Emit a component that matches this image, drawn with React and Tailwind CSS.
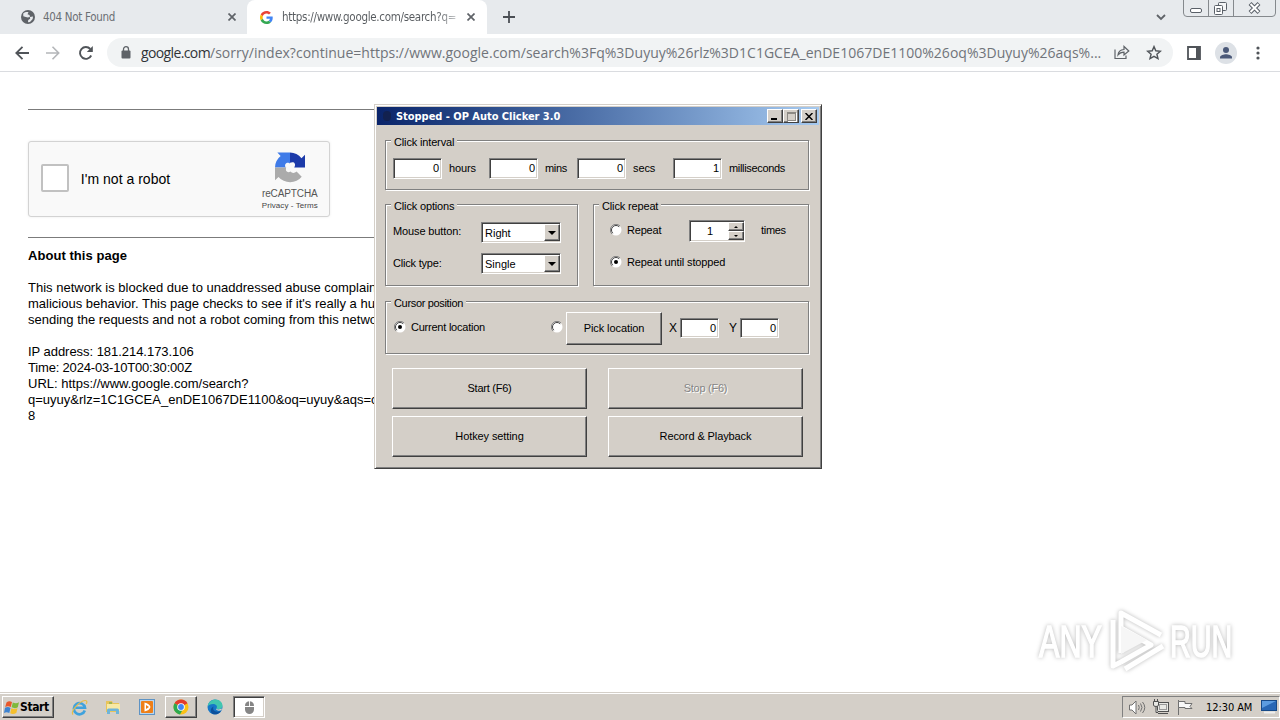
import React from "react";

const etched = "border border-[#808080] shadow-[1px_1px_0_#fff,inset_1px_1px_0_#fff]";
const raised =
  "bg-[#d4cfc8] border border-t-white border-l-white border-b-[#404040] border-r-[#404040] shadow-[inset_-1px_-1px_0_#808080]";
const sunken =
  "bg-white border border-t-[#808080] border-l-[#808080] border-b-white border-r-white shadow-[inset_1px_1px_0_#404040,inset_-1px_-1px_0_#d4cfc8]";

function Tab({ children, className }) {
  return <div className={`flex h-[34px] items-center ${className}`}>{children}</div>;
}

function CloseX({ className }) {
  return (
    <svg className={className} width="8" height="8" viewBox="0 0 8 8" stroke="#5f6368" strokeWidth="1.7">
      <path d="M.5.5l7 7M7.5.5l-7 7" />
    </svg>
  );
}

function Chrome() {
  return (
    <header className="font-['DejaVu_Sans_Condensed',sans-serif]">
      <div className="flex h-[34px] bg-[#e7eaed]">
        <Tab className="w-[240px] pl-[21px]">
          <svg width="14" height="14" viewBox="0 0 14 14">
            <circle cx="7" cy="7" r="7" fill="#5f6368" />
            <path d="M2.200 3.500C4 2 6 1.800 7.500 2.200L6.500 4.200l2 .8.500 1.800-2 .7-2.200-.5-2.500-.8zM12 6.500l-.3 2.500L9 12l-2 .3L7.200 10l2-1.200L8.800 7z" fill="#e7eaed" />
          </svg>
          <span className="mt-[2px] ml-2 grow text-[11.500px] tracking-[-0.300px] text-[#6b6f74]">404 Not Found</span>
          <CloseX className="mr-[4px]" />
        </Tab>
        <Tab className="relative ml-[7px] w-[240px] rounded-t-lg bg-white pl-[13px]">
          <svg width="13" height="13" viewBox="0 0 48 48">
            <path fill="#EA4335" d="M24 9.500c3.540 0 6.710 1.220 9.210 3.600l6.850-6.850C35.900 2.380 30.470 0 24 0 14.620 0 6.510 5.380 2.560 13.220l7.980 6.190C12.430 13.720 17.740 9.500 24 9.500z" />
            <path fill="#4285F4" d="M46.980 24.550c0-1.570-.15-3.090-.38-4.550H24v9.020h12.940c-.58 2.960-2.260 5.480-4.780 7.180l7.730 6c4.510-4.180 7.090-10.360 7.090-17.650z" />
            <path fill="#FBBC05" d="M10.530 28.590c-.48-1.450-.76-2.990-.76-4.590s.27-3.140.76-4.590l-7.980-6.190C.92 16.460 0 20.120 0 24c0 3.880.92 7.540 2.560 10.780l7.970-6.190z" />
            <path fill="#34A853" d="M24 48c6.480 0 11.930-2.130 15.890-5.810l-7.730-6c-2.150 1.450-4.920 2.300-8.160 2.300-6.260 0-11.570-4.220-13.470-9.910l-7.980 6.190C6.510 42.620 14.620 48 24 48z" />
          </svg>
          <span className="mt-[2px] ml-[9px] w-[175px] whitespace-nowrap bg-linear-to-r from-[#55595d] from-88% to-[#cfd1d3] bg-clip-text text-[11.500px] tracking-[-0.300px] text-transparent">
            https://www.google.com/search?q=
          </span>
          <CloseX className="ml-[10px]" />
        </Tab>
        <svg className="mt-[11px] ml-4" width="12" height="12" viewBox="0 0 12 12" stroke="#4b4f54" strokeWidth="1.800">
          <path d="M6 0v12M0 6h12" />
        </svg>
        <svg className="mt-[14px] ml-auto" width="10" height="7" viewBox="0 0 10 7" fill="none" stroke="#5f6368" strokeWidth="1.800">
          <path d="M1 1l4 4 4-4" />
        </svg>
        <svg className="mr-1 ml-[17px]" width="93" height="18" viewBox="0 0 93 18" fill="none" stroke="#85898d">
          <path d="M.5 0v13q0 3.500 3.500 3.500h85q3.500 0 3.500-3.500V0M25.500 0v16.500M50.500 0v16.500" />
          <g stroke="#5a6068">
            <rect x="7.500" y="8.500" width="11" height="4" rx="1.500" fill="#fff" />
            <rect x="35.500" y="2.500" width="8" height="8" rx="1" fill="#f4f5f6" />
            <rect x="31.500" y="5.500" width="8" height="9" rx="1" fill="#fff" />
            <rect x="34" y="8.500" width="3" height="3" />
          </g>
          <path d="M67 3.500l9 9M76 3.500l-9 9" stroke="#5a6068" strokeWidth="4" />
          <path d="M67.500 4l8 8M75.500 4l-8 8" stroke="#fff" strokeWidth="2" />
        </svg>
      </div>

      <div className="flex h-[38px] items-center border-b border-[#dadce0] bg-white pl-[15px]">
        <svg width="14" height="14" viewBox="0 0 14 14" fill="none" stroke="#505459" strokeWidth="1.800">
          <path d="M14 7H1.500M7.500.8L1.300 7l6.200 6.200" />
        </svg>
        <svg className="ml-[17px]" width="14" height="14" viewBox="0 0 14 14" fill="none" stroke="#b4b6b9" strokeWidth="1.600">
          <path d="M0 7h12.500M6.500.8L12.700 7l-6.200 6.200" />
        </svg>
        <svg className="ml-[18px]" width="16" height="16" viewBox="0 0 16 16">
          <path d="M13.200 10.500A5.900 5.900 0 1 1 12.300 4" fill="none" stroke="#505459" strokeWidth="1.900" />
          <path d="M14.800 1v6H8.800z" fill="#505459" />
        </svg>
        <div className="ml-[13px] flex h-[29px] w-[1066px] items-center rounded-full bg-[#f1f3f4] pl-[14px]">
          <svg width="10" height="13" viewBox="0 0 10 13">
            <rect y="4.500" x=".5" width="9" height="8" rx="1" fill="#5f6368" />
            <path d="M2.500 5V3.200a2.500 2.500 0 0 1 5 0V5" fill="none" stroke="#5f6368" strokeWidth="1.300" />
          </svg>
          <span className="ml-[10px] w-[961px] whitespace-nowrap font-['Open_Sans',sans-serif] text-[14px] leading-none tracking-[0.013px] text-[#70747a]">
            <span className="tracking-[-0.620px] text-[#303337]">google.com</span>
            /sorry/index?continue=https://www.google.com/search%3Fq%3Duyuy%26rlz%3D1C1GCEA_enDE1067DE1100%26oq%3Duyuy%26aqs%...
          </span>
          <svg className="ml-[12px]" width="16" height="15" viewBox="0 0 16 15" fill="none" stroke="#5f6368" strokeWidth="1.200">
            <path d="M1 4.500v9h11v-3M4 10c.3-3.500 2.500-5.300 6-5.500V1.500L14.800 6 10 10V7.200C7.500 7.200 5.500 8 4 10z" />
          </svg>
          <svg className="ml-[16px]" width="16" height="15" viewBox="0 0 16 15" fill="none" stroke="#505459" strokeWidth="1.400">
            <path d="M8 1.600l1.800 4.200 4.600.4-3.500 3 1.100 4.400L8 11.300l-4 2.300 1.100-4.400-3.500-3 4.600-.4z" />
          </svg>
        </div>
        <svg className="ml-[14px]" width="14" height="14" viewBox="0 0 14 14">
          <path d="M1 1h12v12H1z" fill="none" stroke="#505459" strokeWidth="1.800" />
          <path d="M9 1h4v12H9z" fill="#505459" />
        </svg>
        <svg className="ml-[14px]" width="22" height="22" viewBox="0 0 22 22">
          <circle cx="11" cy="11" r="11" fill="#dde1e6" />
          <circle cx="11" cy="8" r="3" fill="#4a5878" />
          <path d="M5 16.500v-1.300c0-2 4-3 6-3s6 1 6 3v1.300z" fill="#4a5878" />
        </svg>
        <svg className="ml-[19px]" width="4" height="14" viewBox="0 0 4 14" fill="#505459">
          <circle cx="2" cy="2" r="1.600" />
          <circle cx="2" cy="7" r="1.600" />
          <circle cx="2" cy="12" r="1.600" />
        </svg>
      </div>
    </header>
  );
}

function Page() {
  return (
    <main className="grow overflow-hidden bg-white pl-7 font-['Liberation_Sans',sans-serif] text-[13px] leading-4 text-black">
      <hr className="mt-[37px] w-[400px] border-[#7b7b7b]" />
      <div className="mt-[31px] flex h-[76px] w-[302px] items-center rounded-[3px] border border-[#d3d3d3] bg-[#f9f9f9] pl-3 shadow-[0_0_3px_rgba(0,0,0,0.08)]">
        <div className="mb-[2px] h-7 w-7 rounded-[2px] border-2 border-[#c1c1c1] bg-white" />
        <span className="ml-3 w-[168px] text-[14px] tracking-[0.020px]">I'm not a robot</span>
        <div className="flex w-[82px] flex-col items-center pt-[5px] pl-[3px] text-[#555]">
          <svg width="30" height="31" viewBox="0 0 64 64">
            <path d="M64 32V4.700l-7.500 7.500A32 32 0 0 0 32 0v22c3-1 6-2 9 0 3 3 2 7 0 10z" fill="#1c3aa9" />
            <path d="M32 0H5l7 7.500A32 32 0 0 0 0 32h23c-3-4-1-9 3-10 3-1 5 0 6 2z" fill="#3f7be8" />
            <path d="M0 32v27l7.500-7A32 32 0 0 0 57 51.500L46 40.500c-4 4-10 4-13 0-3 2-7 2-9-1-1-3-1-5 0-7.500z" fill="#ababab" />
          </svg>
          <span className="mt-[5px] text-[10px] leading-3 tracking-[-0.100px]">reCAPTCHA</span>
          <span className="text-[8px] leading-3 tracking-[0.080px] text-[#444]">Privacy - Terms</span>
        </div>
      </div>
      <hr className="mt-5 w-[400px] border-[#7b7b7b]" />
      <b className="mt-[10px] block tracking-[0.050px]">About this page</b>
      <p className="mt-4 w-[600px] whitespace-nowrap">
        This network is blocked due to unaddressed abuse complaints about
        <br />
        malicious behavior. This page checks to see if it's really a human
        <br />
        sending the requests and not a robot coming from this network.
      </p>
      <p className="mt-4 w-[600px] whitespace-nowrap">
        <span className="tracking-[-0.040px]">IP address: 181.214.173.106</span>
        <br />
        <span className="tracking-[-0.180px]">Time: 2024-03-10T00:30:00Z</span>
        <br />
        URL: https://www.google.com/search?
        <br />
        q=uyuy&amp;rlz=1C1GCEA_enDE1067DE1100&amp;oq=uyuy&amp;aqs=c
        <br />8
      </p>
    </main>
  );
}

function Legend({ children, className = "tracking-[-0.150px]" }) {
  return (
    <div className={`-mt-[6px] ml-[5px] h-[14px] w-fit bg-[#d4cfc8] px-[3px] leading-[14px] ${className}`}>{children}</div>
  );
}

function NumberBox({ value, className }) {
  return <div className={`${sunken} flex items-center justify-end pr-[2px] ${className}`}>{value}</div>;
}

function Arrow({ up, small }) {
  return (
    <svg width={small ? 4 : 8} height={small ? 2 : 4} viewBox="0 0 8 4" className={up ? "rotate-180" : ""}>
      <path d="M0 0h8L4 4z" fill="#000" />
    </svg>
  );
}

function Select({ value }) {
  return (
    <div className={`${sunken} flex h-[21px] w-[80px] items-center pr-0 pl-[3px]`}>
      <span className="mt-px grow">{value}</span>
      <span className={`${raised} flex h-[17px] w-4 items-center justify-center`}>
        <Arrow />
      </span>
    </div>
  );
}

function Radio({ on }) {
  return (
    <svg width="12" height="12" viewBox="0 0 12 12">
      <circle cx="6" cy="6" r="5.500" fill="#fff" />
      <path d="M2 10A5.500 5.500 0 0 1 10 2" fill="none" stroke="#808080" />
      <path d="M2.800 9.200A4.500 4.500 0 0 1 9.200 2.800" fill="none" stroke="#404040" />
      {on && <circle cx="6" cy="6" r="2" fill="#000" />}
    </svg>
  );
}

function Button({ children, className = "h-[41px] w-[195px] tracking-[-0.100px]" }) {
  return <div className={`${raised} flex items-center justify-center ${className}`}>{children}</div>;
}

function Clicker() {
  return (
    <div className="absolute top-[104px] left-[374px] h-[365px] w-[448px] border border-t-[#d4cfc8] border-r-[#404040] border-b-[#404040] border-l-[#d4cfc8] bg-[#d4cfc8] p-[2px] font-['Liberation_Sans',sans-serif] text-[11px] text-black shadow-[inset_1px_1px_0_#fff,inset_-1px_-1px_0_#808080]">
      <div className="flex h-[18px] items-center bg-linear-to-r from-[#0a246a] to-[#a6caf0] pr-[2px]">
        <span className="ml-[6px] h-[10px] w-[8px] rounded-full bg-[#12214f]" />
        <span className="mt-[2px] ml-[5px] grow font-['DejaVu_Sans_Condensed',sans-serif] text-[11px] leading-4 font-bold tracking-[-0.030px] text-white">
          Stopped - OP Auto Clicker 3.0
        </span>
        <span className={`${raised} flex h-[14px] w-4 items-end pb-[2px] pl-[3px]`}>
          <span className="h-[2px] w-[6px] bg-black" />
        </span>
        <span className={`${raised} flex h-[14px] w-4 items-center justify-center`}>
          <span className="h-[9px] w-[9px] border border-t-2 border-[#8c8984] shadow-[1px_1px_0_#fff]" />
        </span>
        <span className={`${raised} ml-[2px] flex h-[14px] w-4 items-center justify-center`}>
          <svg width="8" height="7" viewBox="0 0 8 7" stroke="#000" strokeWidth="1.500">
            <path d="M.5 0l7 7M7.500 0l-7 7" />
          </svg>
        </span>
      </div>

      <div className={`mt-[15px] ml-2 h-[50px] w-[424px] ${etched}`}>
        <Legend>Click interval</Legend>
        <div className="mt-[9px] flex h-[21px] items-center pl-[7px] tracking-[-0.100px]">
          <NumberBox value="0" className="h-[21px] w-[49px]" />
          <span className="w-[47px] pl-[7px]">hours</span>
          <NumberBox value="0" className="h-[21px] w-[49px]" />
          <span className="w-[39px] pl-[7px] tracking-[-0.300px]">mins</span>
          <NumberBox value="0" className="h-[21px] w-[49px]" />
          <span className="w-[47px] pl-[7px]">secs</span>
          <NumberBox value="1" className="h-[21px] w-[49px]" />
          <span className="z-10 h-[20px] grow bg-[#d4cfc8] pl-[7px] leading-[19px] tracking-[-0.330px]">milliseconds</span>
        </div>
      </div>

      <div className="mt-[14px] ml-2 flex gap-[15px]">
        <div className={`h-[82px] w-[193px] ${etched}`}>
          <Legend>Click options</Legend>
          <div className="mt-[9px] flex items-center pl-[7px]">
            <span className="mb-[2px] w-[88px] tracking-[-0.120px]">Mouse button:</span>
            <Select value="Right" />
          </div>
          <div className="mt-[10px] flex items-center pl-[7px]">
            <span className="mb-[1px] w-[88px] tracking-[-0.200px]">Click type:</span>
            <Select value="Single" />
          </div>
        </div>
        <div className={`h-[82px] w-[216px] ${etched}`}>
          <Legend>Click repeat</Legend>
          <div className="mt-[7px] flex items-center pl-4">
            <span className="mb-[2px]"><Radio /></span>
            <span className="mb-[2px] w-[67px] pl-[5px] tracking-[-0.200px]">Repeat</span>
            <div className={`${sunken} flex h-[22px] w-[56px] items-center pl-[2px]`}>
              <span className="grow text-center">1</span>
              <span className="flex h-[18px] w-4 flex-col">
                <span className={`${raised} flex grow items-center justify-center`}>
                  <Arrow up small />
                </span>
                <span className={`${raised} flex grow items-center justify-center`}>
                  <Arrow small />
                </span>
              </span>
            </div>
            <span className="mb-[2px] ml-4 tracking-[-0.300px]">times</span>
          </div>
          <div className="mt-[12px] flex h-4 items-center gap-[5px] pl-4 tracking-[-0.130px]">
            <Radio on />
            Repeat until stopped
          </div>
        </div>
      </div>

      <div className={`mt-[15px] ml-2 h-[53px] w-[424px] ${etched}`}>
        <Legend className="tracking-[-0.330px]">Cursor position</Legend>
        <div className="mt-[2px] flex items-center pl-2">
          <span className="mb-[4px]"><Radio on /></span>
          <span className="mb-[3px] w-[145px] pl-[5px] tracking-[-0.230px]">Current location</span>
          <span className="mb-[4px]"><Radio /></span>
          <Button className="mr-[2px] ml-[3px] h-[33px] w-[96px] tracking-[-0.080px]">Pick location</Button>
          <span className="mb-px ml-[5px] w-[11px] text-[12px]">X</span>
          <NumberBox value="0" className="mb-px h-[20px] w-[39px] pt-px" />
          <span className="mb-px ml-[10px] w-[11px] text-[12px]">Y</span>
          <NumberBox value="0" className="mb-px h-[20px] w-[39px] pt-px" />
        </div>
      </div>

      <div className="mt-[14px] ml-[15px] grid w-fit grid-cols-2 gap-x-[21px] gap-y-[7px]">
        <Button>
          <span className="tracking-[-0.250px]">Start (F6)</span>
        </Button>
        <Button>
          <span className="tracking-[-0.250px] text-[#858585] [text-shadow:1px_1px_0_#fff]">Stop (F6)</span>
        </Button>
        <Button>Hotkey setting</Button>
        <Button>Record &amp; Playback</Button>
      </div>
    </div>
  );
}

function Watermark() {
  return (
    <div className="absolute top-[607px] left-[1039px] flex h-[68px] w-[200px] items-center text-white drop-shadow-[0_0_2px_rgba(0,0,0,0.28)]">
      <span className="w-[70px] origin-left scale-x-[0.68] font-['Liberation_Sans',sans-serif] text-[45px] leading-none [-webkit-text-stroke:1.500px_#fff]">ANY</span>
      <svg className="shrink-0" width="58" height="66" viewBox="0 0 58 66" fill="none" stroke="#fff" strokeWidth="5" strokeLinejoin="round">
        <path d="M12 45V5l40 22M4 12v46l8-4M16 61l38-23M12 45V20l30 17-30 17" />
        <path d="M12 18v28l26-14z" fill="#f6f6f6" stroke="none" />
      </svg>
      <span className="ml-[3px] w-[66px] origin-left scale-x-[0.64] font-['Liberation_Sans',sans-serif] text-[45px] leading-none [-webkit-text-stroke:1.500px_#fff]">RUN</span>
    </div>
  );
}

function Taskbar() {
  return (
    <footer className="flex h-[28px] shrink-0 items-center border-t border-[#d4cfc8] bg-[#d4cfc8] font-['DejaVu_Sans_Condensed',sans-serif] text-[11px] text-black shadow-[inset_0_1px_0_#fff]">
      <div className={`${raised} mt-px ml-[2px] flex h-[22px] w-[52px] items-center pl-[1px] text-[12px] font-bold`}>
        <svg className="shrink-0" width="16" height="15" viewBox="0 0 16 15">
          <path d="M2.500 2.500Q5 .5 8 2L6.800 7Q4 5.500 1.200 7z" fill="#e8582b" />
          <path d="M8.800 2.400Q12 4 15 2.200L13.800 7.200Q11 9 7.600 7.300z" fill="#7fb93c" />
          <path d="M1 7.800Q4 6.300 6.500 7.900L5.300 13Q2.500 11.500 0 13z" fill="#3e83d0" />
          <path d="M7.400 8.200Q10.500 9.800 13.500 8.200L12.300 13Q9 15 6.200 13.300z" fill="#f5bf2c" />
        </svg>
        <span className="tracking-[-0.400px]">Start</span>
      </div>
      <svg className="mt-px ml-[17px]" width="17" height="17" viewBox="0 0 17 17" fill="none">
        <path d="M13.800 11.500A5.600 5.600 0 1 1 14 8.700H4.500" stroke="#3fa2dd" strokeWidth="2.600" />
        <path d="M2 15.500C-1 12 9 2 14 1.500c2.500-.2 2 2 1.200 3.500" stroke="#e7bd48" strokeWidth="1.200" />
      </svg>
      <svg className="mt-px ml-[17px]" width="16" height="16" viewBox="0 0 16 16">
        <path d="M1 2h6l1 2h6v9H1z" fill="#e8c45a" />
        <path d="M2 5h13v7H2z" fill="#f8e9a4" />
        <path d="M2 15v-4q0-1.500 1.500-1.500h9q1.500 0 1.500 1.500v4h-3v-3H5v3z" fill="#6fb4d8" />
        <path d="M4 4h3" stroke="#59a54e" />
      </svg>
      <svg className="mt-px ml-[18px]" width="16" height="16" viewBox="0 0 16 16">
        <rect x=".5" y=".5" width="15" height="15" fill="#b9d5ee" stroke="#5e93c4" />
        <rect x="2" y="2" width="12" height="12" rx="1" fill="#ee7f18" />
        <path d="M5.500 3.500q5 1 6 4.500-1 3.500-6 4.500z" fill="#fff" />
        <path d="M7 6l3 2-3 2z" fill="#ee7f18" />
      </svg>
      <div className={`${raised} mt-px ml-[10px] flex h-[22px] w-[32px] items-center justify-center`}>
        <svg width="16" height="16" viewBox="0 0 16 16">
          <circle cx="8" cy="8" r="7.500" fill="#fbc116" />
          <path d="M8 8L1.500 4.200A7.500 7.500 0 0 1 14.500 4.200z" fill="#e33b2e" />
          <path d="M8 8L1.500 4.200A7.500 7.500 0 0 0 7 15.450L10 10z" fill="#2da94f" />
          <circle cx="8" cy="8" r="3.800" fill="#fff" />
          <circle cx="8" cy="8" r="2.900" fill="#4285f4" />
        </svg>
      </div>
      <svg className="mt-px ml-[10px]" width="16" height="16" viewBox="0 0 16 16">
        <circle cx="8" cy="8" r="7.500" fill="#1677c8" />
        <path d="M.6 7.500C1.500 2.500 5 .5 8.500.5c4 0 7 3 7 6 0 4-5 4.500-6 3 1.500-3-1-4.500-3.500-4.500-2.500 0-4.500 1.200-5.400 2.500z" fill="#41c6b0" />
        <path d="M6.500 7.500c-1.500 4 2 6.500 7.500 4.500-2.500 3.800-6.500 4-9 2.500-2-2-1.500-5.500 1.500-7z" fill="#0c509c" />
        <path d="M9 9.500c1.500 1.500 4.500.8 6 0l-.5 1.700c-3 1-5.500.3-5.500-1.700z" fill="#d4cfc8" />
      </svg>
      <div className={`${sunken} mt-px ml-[10px] flex h-[22px] w-[32px] items-center justify-center`}>
        <svg width="9" height="13" viewBox="0 0 10 13" preserveAspectRatio="none">
          <path d="M0 5a5 4.800 0 0 1 4.500-4.800V5zM5.500.2A5 4.800 0 0 1 10 5H5.500zM0 6h10v2.500a5 4.500 0 0 1-10 0z" fill="#858585" />
        </svg>
      </div>
      <div className="mt-px ml-auto flex h-[22px] w-[158px] items-center border border-t-[#808080] border-r-white border-b-white border-l-[#808080] pl-[6px]">
        <svg width="17" height="15" viewBox="0 0 17 15" fill="#fff" stroke="#707070">
          <path d="M.5 5v5h2.500l4 4V1L3 5z" />
          <path d="M9.500 5q1.500 2.500 0 5M11.500 3.500q3 4 0 8M13.500 2q4.500 5.500 0 11" fill="none" />
        </svg>
        <svg className="ml-[7px]" width="16" height="16" viewBox="0 0 16 16" fill="#e8e8e4" stroke="#505050">
          <rect x="4.500" y="3.500" width="11" height="9" />
          <rect x="6.500" y="5.500" width="7" height="5" stroke="#999" />
          <path d="M5 14.500h10" />
          <path d="M.5 2.500h5V6q0 1.500-2.500 1.500T.5 6zM1.500 0v2.500M4.500 0v2.500M3 7.500v6h2" />
        </svg>
        <svg className="ml-[8px]" width="16" height="15" viewBox="0 0 16 15" fill="#f8f8f8" stroke="#707070">
          <path d="M1.500 0v15" />
          <path d="M1.500 1.500H8v2h7l-2 3 2 2H8v-1H1.500z" />
        </svg>
        <span className="mt-[2px] ml-[13px] w-[55px] whitespace-nowrap tracking-[-0.080px]">12:30 AM</span>
        <svg width="16" height="14" viewBox="0 0 16 14">
          <rect x=".5" y=".5" width="15" height="10" fill="#2867b5" stroke="#174a88" />
          <path d="M1 1h14L1 8z" fill="#5c9ce0" />
          <path d="M3 12.500h11" stroke="#eee" strokeWidth="2" />
        </svg>
      </div>
    </footer>
  );
}

export default function App() {
  return (
    <div className="relative flex h-[720px] w-[1280px] flex-col overflow-hidden bg-white">
      <Chrome />
      <Page />
      <Taskbar />
      <Clicker />
      <Watermark />
    </div>
  );
}
